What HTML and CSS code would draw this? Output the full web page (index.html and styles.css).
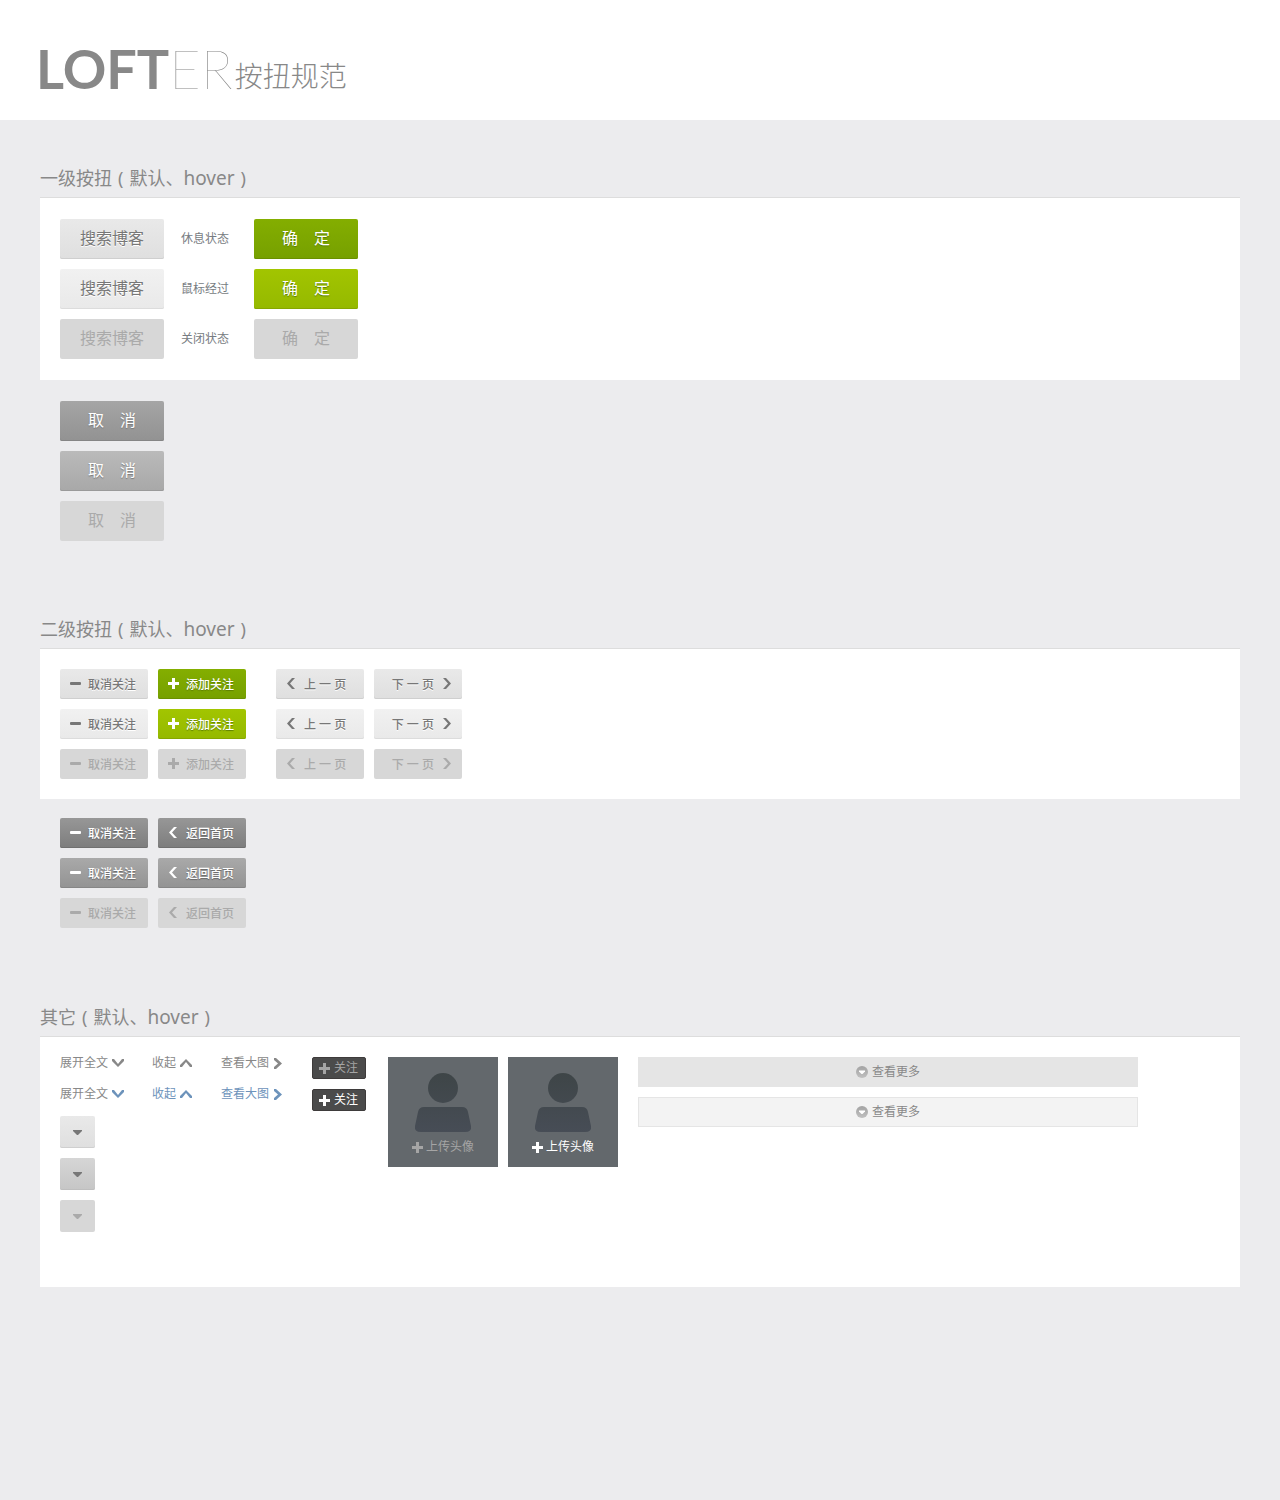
FILE: index.html
```html
<!DOCTYPE html>
<html lang="zh-CN">
<head>
<meta charset="utf-8">
<meta name="viewport" content="width=device-width, initial-scale=1">
<title>LOFTER 按扭规范</title>
<link rel="stylesheet" href="styles.css">
</head>
<body>
<svg class="sprite" aria-hidden="true">
  <defs>
    <linearGradient id="person-fill" x1="0" y1="15" x2="0" y2="76" gradientUnits="userSpaceOnUse">
      <stop offset="0" stop-color="#3e4547"/><stop offset="1" stop-color="#474d56"/>
    </linearGradient>
    <linearGradient id="dot-fill" x1="0" y1="0" x2="0" y2="1">
      <stop offset="0" stop-color="#a3a3a3"/><stop offset="1" stop-color="#c0c0c0"/>
    </linearGradient>
  </defs>
  <symbol id="minus" viewBox="0 0 11 11"><rect y="4" width="11" height="3" rx="1"/></symbol>
  <symbol id="plus" viewBox="0 0 11 11"><path d="M4 0h3v4h4v3H7v4H4V7H0V4h4z"/></symbol>
  <symbol id="prev" viewBox="0 0 11 11"><path d="M6 0h3L4 5.500 9 11H6L1 5.500z"/></symbol>
  <symbol id="next" viewBox="0 0 11 11"><path d="M5 0H2l5 5.500L2 11h3l5-5.500z"/></symbol>
  <symbol id="down" viewBox="0 0 12 8"><path d="M0 0v2l6 6 6-6V0h-2L6 5 2 0z"/></symbol>
  <symbol id="up" viewBox="0 0 12 8"><path d="M0 8V6l6-6 6 6v2h-2L6 3 2 8z"/></symbol>
  <symbol id="right" viewBox="0 0 9 11"><path d="M1 0h2l6 5.500L3 11H1V9l4-3.500L1 2z"/></symbol>
  <symbol id="caret" viewBox="0 0 9 5"><path d="M0 0h9v1L5 5H4L0 1z"/></symbol>
  <symbol id="dot" viewBox="0 0 12 12"><circle cx="6" cy="6" r="6" fill="url(#dot-fill)"/><path d="M3 4.500h6v1L6.500 8h-1L3 5.500z" fill="#fff"/></symbol>
  <symbol id="person" viewBox="0 0 110 80"><circle cx="55" cy="31" r="15" fill="url(#person-fill)"/><path d="M36 50h38q5 0 6 5l3 14q1 6-6 6H33q-7 0-6-6l3-14q1-5 6-5z" fill="url(#person-fill)"/></symbol>
</svg>

<header class="header">
  <h1 class="title"><span class="logo"><b>LOFT</b><i>ER</i></span><span class="title-text">按扭规范</span></h1>
</header>

<main class="main">
  <section class="section">
    <h2 class="heading">一级按扭<span class="paren">(</span>默认、<span class="latin">hover</span><span class="paren">)</span></h2>
    <div class="panel primary-grid">
      <button type="button" class="btn big light">搜索博客</button><span class="state">休息状态</span><button type="button" class="btn big green">确　定</button>
      <button type="button" class="btn big light is-hover">搜索博客</button><span class="state">鼠标经过</span><button type="button" class="btn big green is-hover">确　定</button>
      <button type="button" class="btn big" disabled>搜索博客</button><span class="state">关闭状态</span><button type="button" class="btn big" disabled>确　定</button>
    </div>
    <div class="below primary-below">
      <button type="button" class="btn big gray">取　消</button>
      <button type="button" class="btn big gray is-hover">取　消</button>
      <button type="button" class="btn big" disabled>取　消</button>
    </div>
  </section>

  <section class="section">
    <h2 class="heading">二级按扭<span class="paren">(</span>默认、<span class="latin">hover</span><span class="paren">)</span></h2>
    <div class="panel secondary">
      <div class="pair">
        <button type="button" class="btn small light"><svg class="icon"><use href="#minus"/></svg>取消关注</button>
        <button type="button" class="btn small green"><svg class="icon"><use href="#plus"/></svg>添加关注</button>
        <button type="button" class="btn small light is-hover"><svg class="icon"><use href="#minus"/></svg>取消关注</button>
        <button type="button" class="btn small green is-hover"><svg class="icon"><use href="#plus"/></svg>添加关注</button>
        <button type="button" class="btn small" disabled><svg class="icon"><use href="#minus"/></svg>取消关注</button>
        <button type="button" class="btn small" disabled><svg class="icon"><use href="#plus"/></svg>添加关注</button>
      </div>
      <div class="pair">
        <button type="button" class="btn small light"><svg class="icon"><use href="#prev"/></svg>上 一 页</button>
        <button type="button" class="btn small light forward">下 一 页<svg class="icon"><use href="#next"/></svg></button>
        <button type="button" class="btn small light is-hover"><svg class="icon"><use href="#prev"/></svg>上 一 页</button>
        <button type="button" class="btn small light is-hover forward">下 一 页<svg class="icon"><use href="#next"/></svg></button>
        <button type="button" class="btn small" disabled><svg class="icon"><use href="#prev"/></svg>上 一 页</button>
        <button type="button" class="btn small forward" disabled>下 一 页<svg class="icon"><use href="#next"/></svg></button>
      </div>
    </div>
    <div class="below pair">
      <button type="button" class="btn small dark"><svg class="icon"><use href="#minus"/></svg>取消关注</button>
      <button type="button" class="btn small dark"><svg class="icon"><use href="#prev"/></svg>返回首页</button>
      <button type="button" class="btn small dark is-hover"><svg class="icon"><use href="#minus"/></svg>取消关注</button>
      <button type="button" class="btn small dark is-hover"><svg class="icon"><use href="#prev"/></svg>返回首页</button>
      <button type="button" class="btn small" disabled><svg class="icon"><use href="#minus"/></svg>取消关注</button>
      <button type="button" class="btn small" disabled><svg class="icon"><use href="#prev"/></svg>返回首页</button>
    </div>
  </section>

  <section class="section">
    <h2 class="heading">其它<span class="paren">(</span>默认、<span class="latin">hover</span><span class="paren">)</span></h2>
    <div class="panel others">
      <div class="text-controls">
        <div class="links">
          <a class="link" href="#expand">展开全文<svg class="fold"><use href="#down"/></svg></a>
          <a class="link" href="#collapse">收起<svg class="fold"><use href="#up"/></svg></a>
          <a class="link" href="#view">查看大图<svg class="angle"><use href="#right"/></svg></a>
          <a class="link icon-hover" href="#expand">展开全文<svg class="fold"><use href="#down"/></svg></a>
          <a class="link is-hover" href="#collapse">收起<svg class="fold"><use href="#up"/></svg></a>
          <a class="link is-hover" href="#view">查看大图<svg class="angle"><use href="#right"/></svg></a>
        </div>
        <div class="drops">
          <button type="button" class="btn drop light" aria-label="展开"><svg class="caret"><use href="#caret"/></svg></button>
          <button type="button" class="btn drop pressed" aria-label="展开"><svg class="caret"><use href="#caret"/></svg></button>
          <button type="button" class="btn drop" aria-label="展开" disabled><svg class="caret"><use href="#caret"/></svg></button>
        </div>
      </div>
      <div class="follows">
        <button type="button" class="follow"><svg class="icon"><use href="#plus"/></svg>关注</button>
        <button type="button" class="follow is-hover"><svg class="icon"><use href="#plus"/></svg>关注</button>
      </div>
      <div class="avatars">
        <button type="button" class="avatar"><svg class="person"><use href="#person"/></svg><span class="upload"><svg class="icon"><use href="#plus"/></svg>上传头像</span></button>
        <button type="button" class="avatar is-hover"><svg class="person"><use href="#person"/></svg><span class="upload"><svg class="icon"><use href="#plus"/></svg>上传头像</span></button>
      </div>
      <div class="mores">
        <button type="button" class="more"><svg class="dot"><use href="#dot"/></svg>查看更多</button>
        <button type="button" class="more is-hover"><svg class="dot"><use href="#dot"/></svg>查看更多</button>
      </div>
    </div>
  </section>
</main>
</body>
</html>
```
FILE: styles.css
```css
* { box-sizing: border-box; }

body {
  margin: 0;
  background: #ececee;
  color: #888;
  font: 12px/16px "Noto Sans", "Noto Sans CJK SC", sans-serif;
}

button { margin: 0; padding: 0; border: 0; font: inherit; cursor: pointer; }
svg { display: block; flex: none; fill: currentColor; }
.sprite { position: absolute; width: 0; height: 0; }

/* Page header */
.header { height: 120px; padding: 33px 36px 0; background: #fff; }
.title { display: flex; align-items: flex-end; gap: 2px; margin: 0; font-weight: 300; }
.logo { font: 54px/72px Lato, sans-serif; }
.logo b { font-weight: 700; }
.logo i { font-style: normal; font-weight: 200; }
.title-text { padding-bottom: 11px; font-size: 28px; line-height: 36px; }

/* Sections */
.main { padding: 46px 40px 76px; }
.section + .section { margin-top: 76px; }
.heading { margin: 0; padding-bottom: 7px; font-size: 18px; line-height: 24px; font-weight: 400; }
.latin { font-size: 19px; }
.paren { padding: 0 6px; }
.panel { padding: 20px; background: #fff; border-top: 1px solid #ddd; }
.below { padding: 19px 20px 1px; }

/* Buttons */
.btn {
  display: flex;
  align-items: center;
  border-radius: 2px;
  background: #d7d7d7;
  color: #aaa;
  white-space: nowrap;
}
.btn:disabled { cursor: default; }
.big { justify-content: center; width: 104px; height: 40px; padding-bottom: 2px; font-size: 16px; line-height: 24px; }
.small { gap: 7px; width: 88px; height: 30px; padding: 2px 10px 0; font-weight: 500; }
.small .icon { margin-bottom: 3px; }
.forward { justify-content: flex-end; }
.light {
  background: linear-gradient(#e9e9e9, #dfdfdf);
  box-shadow: inset 0 -1px #cfcfcf;
  color: #777;
  text-shadow: 0 1px #fff;
}
.light.is-hover { background: linear-gradient(#f1f1f1, #e9e9e9); box-shadow: inset 0 -1px #dcdcdc; }
.green {
  background: linear-gradient(#84ae00, #76a000);
  box-shadow: inset 0 -1px #6a9000;
  color: #fff;
  text-shadow: 0 1px 1px #5c7d00;
}
.green.is-hover { background: linear-gradient(#a2c500, #95b900); box-shadow: inset 0 -1px #86a700; }
.gray {
  background: linear-gradient(#a5a5a5, #929292);
  box-shadow: inset 0 -1px #858585;
  color: #fff;
  text-shadow: 0 1px 1px #777;
}
.gray.is-hover { background: linear-gradient(#bababa, #a8a8a8); box-shadow: inset 0 -1px #9a9a9a; }
.dark {
  background: linear-gradient(#979797, #7d7d7d);
  box-shadow: inset 0 -1px #707070;
  color: #fff;
  text-shadow: 0 1px 1px #666;
}
.dark.is-hover { background: linear-gradient(#a9a9a9, #939393); box-shadow: inset 0 -1px #868686; }
.icon { width: 11px; height: 11px; }

/* Primary buttons */
.primary-grid {
  display: grid;
  grid-template-columns: 104px 90px 104px;
  gap: 10px 0;
  align-items: center;
  padding: 21px 20px;
}
.state { padding-left: 17px; color: #777c82; }
.primary-below { display: grid; gap: 10px; padding: 21px 20px 0; }

/* Secondary buttons */
.secondary { display: flex; gap: 30px; }
.pair { display: grid; grid-template-columns: 88px 88px; gap: 10px; }

/* Other controls */
.others { display: flex; align-items: flex-start; padding-bottom: 55px; }
.text-controls { display: grid; gap: 16px; }
.links { display: grid; grid-template-columns: 92px 69px 91px; gap: 19px 0; line-height: 12px; }
.link { display: flex; align-items: center; gap: 4px; color: #888; text-decoration: none; }
.link.is-hover, .icon-hover svg { color: #6d93bb; }
.fold { width: 12px; height: 8px; }
.angle { width: 9px; height: 11px; }
.drops { display: grid; gap: 10px; }
.drop { justify-content: center; width: 35px; height: 32px; }
.pressed { background: linear-gradient(#d6d6d6, #c6c6c6); color: #777; box-shadow: inset 0 -1px #bebebe; }
.caret { width: 9px; height: 5px; }

.follows { display: grid; gap: 10px; }
.follow {
  display: flex;
  align-items: center;
  gap: 4px;
  width: 54px;
  height: 22px;
  padding: 0 6px;
  border: 1px solid #3e3b3b;
  border-radius: 2px;
  background: #4b4b4b;
  color: #a5a5a5;
}
.follow.is-hover, .avatar.is-hover { color: #fff; }

.avatars { display: flex; gap: 10px; margin: 0 20px 0 22px; }
.avatar { width: 110px; height: 110px; padding-bottom: 10px; background: #63686c; color: #a5a5a5; }
.person { width: 110px; height: 80px; }
.upload { display: flex; align-items: center; justify-content: center; gap: 3px; height: 20px; }

.mores { display: grid; flex: 0 1 500px; gap: 10px; }
.more {
  display: flex;
  align-items: center;
  justify-content: center;
  gap: 4px;
  height: 30px;
  border: 1px solid #e5e5e5;
  background: #e5e5e5;
  color: #888;
}
.more.is-hover { background: #f3f3f3; }
.dot { width: 12px; height: 12px; }
```
